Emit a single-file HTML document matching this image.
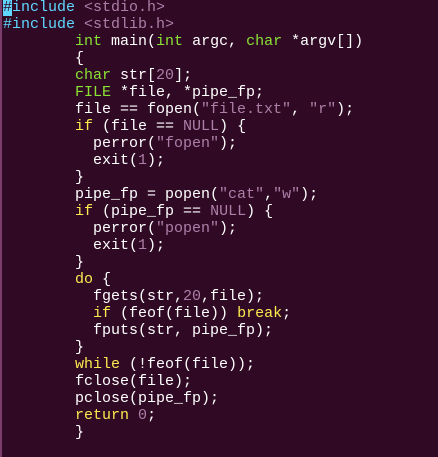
<!DOCTYPE html>
<html><head><style>
html,body{margin:0;padding:0;background:#300a24;width:438px;height:457px;overflow:hidden}
.b{position:absolute;left:0;top:0;width:2px;height:457px;background:#7a3d6c}
pre{position:absolute;left:3px;top:-1px;margin:0;font-family:"Liberation Mono",monospace;font-size:15px;line-height:17px;color:#ffffff}
.p{color:#5fd7ff}.s{color:#ad7fa8}.t{color:#8ae234}.k{color:#fce94f}
.c{background:#5fd7ff;color:#300a24}
</style></head><body><div class="b"></div><pre><span class="c">#</span><span class="p">include</span> <span class="s">&lt;stdio.h&gt;</span>
<span class="p">#include</span> <span class="s">&lt;stdlib.h&gt;</span>
        <span class="t">int</span> main(<span class="t">int</span> argc, <span class="t">char</span> *argv[])
        {
        <span class="t">char</span> str[<span class="s">20</span>];
        <span class="t">FILE</span> *file, *pipe_fp;
        file == fopen(<span class="s">"file.txt"</span>, <span class="s">"r"</span>);
        <span class="k">if</span> (file == <span class="s">NULL</span>) {
          perror(<span class="s">"fopen"</span>);
          exit(<span class="s">1</span>);
        }
        pipe_fp = popen(<span class="s">"cat"</span>,<span class="s">"w"</span>);
        <span class="k">if</span> (pipe_fp == <span class="s">NULL</span>) {
          perror(<span class="s">"popen"</span>);
          exit(<span class="s">1</span>);
        }
        <span class="k">do</span> {
          fgets(str,<span class="s">20</span>,file);
          <span class="k">if</span> (feof(file)) <span class="k">break</span>;
          fputs(str, pipe_fp);
        }
        <span class="k">while</span> (!feof(file));
        fclose(file);
        pclose(pipe_fp);
        <span class="k">return</span> <span class="s">0</span>;
        }</pre></body></html>
